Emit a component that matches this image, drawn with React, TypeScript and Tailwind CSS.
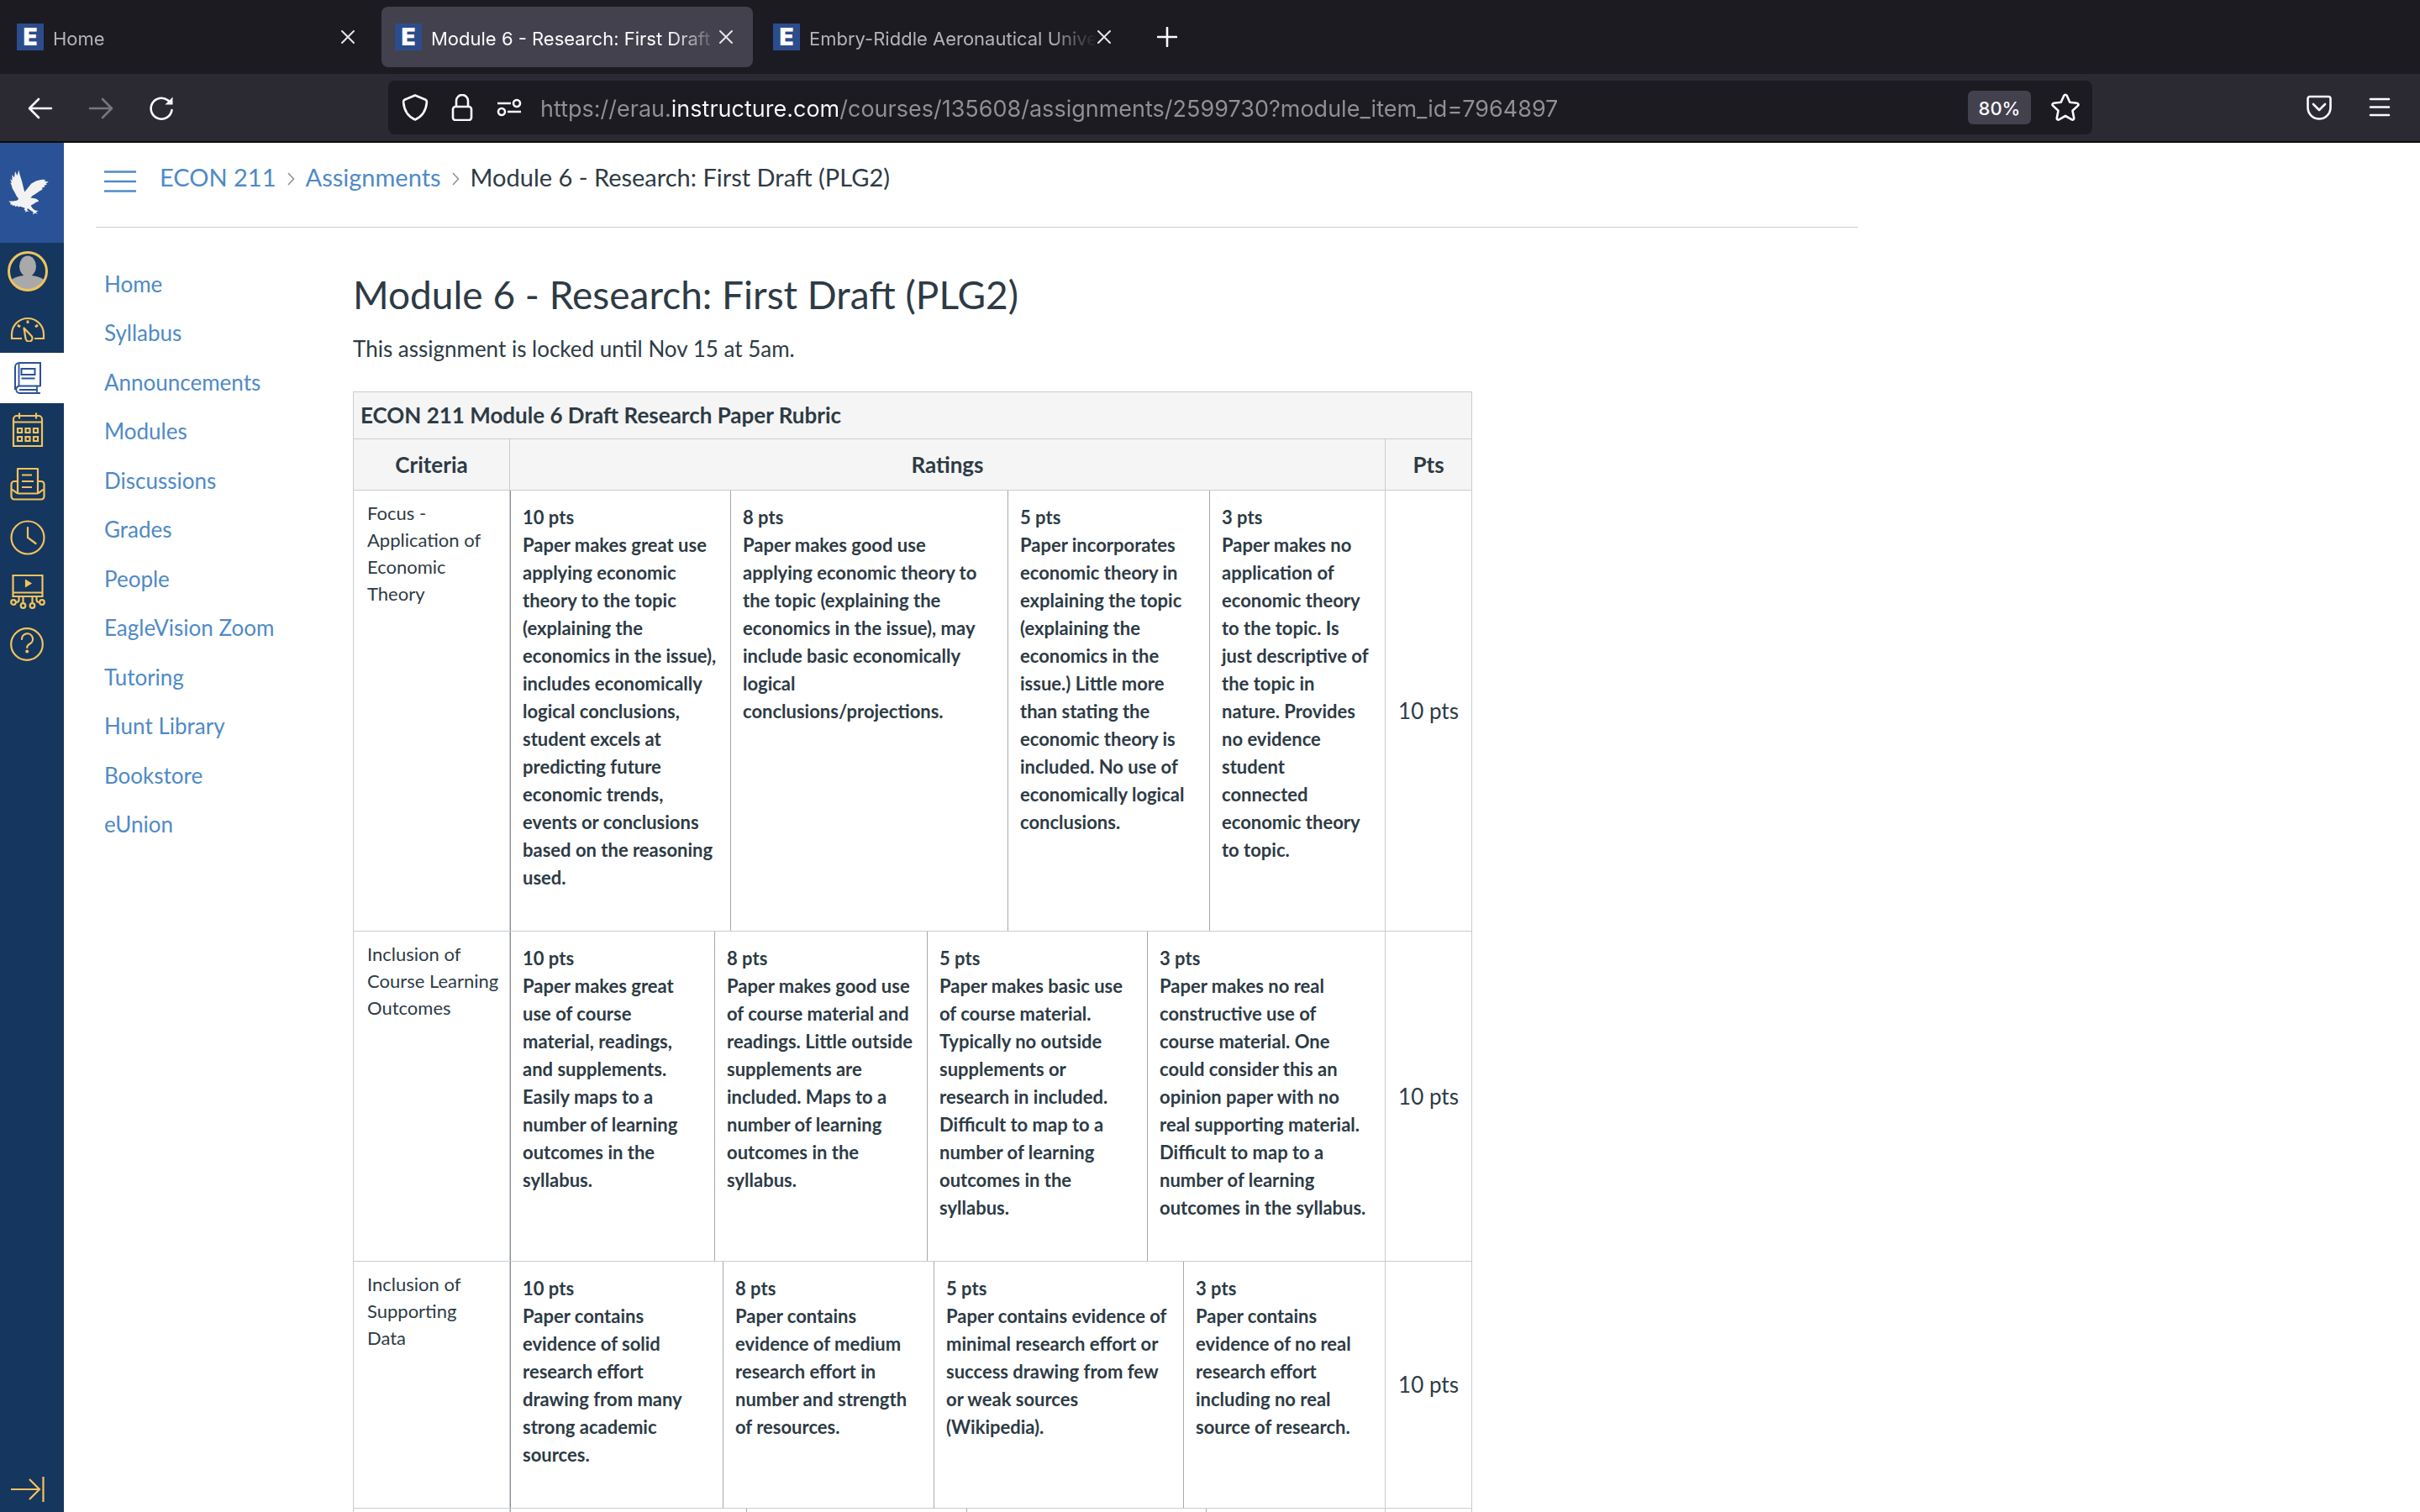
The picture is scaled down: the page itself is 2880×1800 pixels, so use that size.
import React from 'react';

interface Rating {
  pts: string;
  text: string;
  width: string;
}

interface Criterion {
  name: string;
  ratings: Rating[];
  pts: string;
}

const TABS = [
  { title: 'Home', active: false },
  { title: 'Module 6 - Research: First Draft', active: true },
  { title: 'Embry-Riddle Aeronautical Unive', active: false },
];

const COURSE_LINKS = [
  'Home',
  'Syllabus',
  'Announcements',
  'Modules',
  'Discussions',
  'Grades',
  'People',
  'EagleVision Zoom',
  'Tutoring',
  'Hunt Library',
  'Bookstore',
  'eUnion',
];

const CRITERIA: Criterion[] = [
  {
    name: 'Focus -\nApplication of Economic Theory',
    pts: '10 pts',
    ratings: [
      { pts: '10 pts', width: 'w-[262px]', text: 'Paper makes great use applying economic theory to the topic (explaining the economics in the issue), includes economically logical conclusions, student excels at predicting future economic trends, events or conclusions based on the reasoning used.' },
      { pts: '8 pts', width: 'w-[330px]', text: 'Paper makes good use applying economic theory to the topic (explaining the economics in the issue), may include basic economically logical conclusions/projections.' },
      { pts: '5 pts', width: 'w-[240px]', text: 'Paper incorporates economic theory in explaining the topic (explaining the economics in the issue.) Little more than stating the economic theory is included. No use of economically logical conclusions.' },
      { pts: '3 pts', width: 'w-[209px]', text: 'Paper makes no application of economic theory to the topic. Is just descriptive of the topic in nature. Provides no evidence student connected economic theory to topic.' },
    ],
  },
  {
    name: 'Inclusion of\nCourse Learning Outcomes',
    pts: '10 pts',
    ratings: [
      { pts: '10 pts', width: 'w-[243px]', text: 'Paper makes great use of course material, readings, and supplements. Easily maps to a number of learning outcomes in the syllabus.' },
      { pts: '8 pts', width: 'w-[253px]', text: 'Paper makes good use of course material and readings. Little outside supplements are included. Maps to a number of learning outcomes in the syllabus.' },
      { pts: '5 pts', width: 'w-[262px]', text: 'Paper makes basic use of course material. Typically no outside supplements or research in included. Difficult to map to a number of learning outcomes in the syllabus.' },
      { pts: '3 pts', width: 'w-[283px]', text: 'Paper makes no real constructive use of course material. One could consider this an opinion paper with no real supporting material. Difficult to map to a number of learning outcomes in the syllabus.' },
    ],
  },
  {
    name: 'Inclusion of\nSupporting\nData',
    pts: '10 pts',
    ratings: [
      { pts: '10 pts', width: 'w-[253px]', text: 'Paper contains evidence of solid research effort drawing from many strong academic sources.' },
      { pts: '8 pts', width: 'w-[251px]', text: 'Paper contains evidence of medium research effort in number and strength of resources.' },
      { pts: '5 pts', width: 'w-[297px]', text: 'Paper contains evidence of minimal research effort or success drawing from few or weak sources (Wikipedia).' },
      { pts: '3 pts', width: 'w-[240px]', text: 'Paper contains evidence of no real research effort including no real source of research.' },
    ],
  },
];

// the fourth row only peeks in at the bottom edge
const NEXT_ROW_WIDTHS = ['w-[281px]', 'w-[262px]', 'w-[285px]', 'w-[213px]'];

const CloseIcon = () => (
  <svg width="18" height="18" viewBox="0 0 18 18" fill="none" stroke="#e6e6ea" strokeWidth="2" strokeLinecap="round">
    <path d="M2 2l14 14M16 2L2 16" />
  </svg>
);

const Favicon = () => (
  <span className="flex h-8 w-8 shrink-0 items-center justify-center bg-[#2c4d8c] font-['Inter',sans-serif] text-[28px] leading-8 font-black text-white">
    E
  </span>
);

const BrowserTab: React.FC<{ title: string; active: boolean }> = ({ title, active }) => (
  <div className={`flex h-[72px] w-[442px] items-center rounded-lg pr-[23px] pl-4 ${active ? 'bg-[#42414d] text-[#fbfbfe]' : 'text-[#b3b3b8]'}`}>
    <Favicon />
    <span className="ml-[11px] min-w-0 flex-1 overflow-hidden pt-1 text-[22px] whitespace-nowrap [mask-image:linear-gradient(90deg,#000_calc(100%-56px),transparent)]">
      {title}
    </span>
    <button aria-label="Close tab"><CloseIcon /></button>
  </div>
);

const Toolbar = () => (
  <div className="flex h-[82px] items-center border-b-2 border-[#0c0c0d] bg-[#2b2a33] pr-8 pl-8">
    <div className="flex w-[430px] shrink-0 items-center gap-10 pt-px text-[#fbfbfe]">
      <button aria-label="Back">
        <svg width="32" height="32" viewBox="0 0 32 32" fill="none" stroke="currentColor" strokeWidth="2.600" strokeLinecap="round" strokeLinejoin="round">
          <path d="M29 16H4M14 5L3 16l11 11" />
        </svg>
      </button>
      <button aria-label="Forward" className="text-[#77767e]">
        <svg width="32" height="32" viewBox="0 0 32 32" fill="none" stroke="currentColor" strokeWidth="2.600" strokeLinecap="round" strokeLinejoin="round">
          <path d="M3 16h25M18 5l11 11-11 11" />
        </svg>
      </button>
      <button aria-label="Reload">
        <svg width="32" height="32" viewBox="0 0 32 32" fill="none" stroke="currentColor" strokeWidth="2.600" strokeLinecap="round">
          <path d="M28.500 18A12.500 12.500 0 1 1 24 6.500L27 9" />
          <path d="M29.500 2.500v9h-9z" fill="currentColor" stroke="none" />
        </svg>
      </button>
    </div>
    <div className="flex h-16 w-[2028px] min-w-0 items-center rounded-lg bg-[#1c1b22] pr-[15px] pl-4 text-[#fbfbfe]">
      <svg width="32" height="32" viewBox="0 0 32 32" fill="none" stroke="currentColor" strokeWidth="2.600" strokeLinejoin="round">
        <path d="M16 1.500l12 5c1.500.6 2 1.400 1.900 3.200C29.200 18 26.500 26 16 30.500 5.500 26 2.800 18 2.100 9.700 2 7.900 2.500 7.100 4 6.500z" />
      </svg>
      <svg className="ml-6" width="32" height="32" viewBox="0 0 32 32" fill="none" stroke="currentColor" strokeWidth="2.600">
        <rect x="5" y="15" width="22" height="16" rx="3" />
        <path d="M9 15V8a7 7 0 0 1 14 0v7" />
      </svg>
      <svg className="ml-6" width="32" height="32" viewBox="0 0 32 32" fill="none" stroke="currentColor" strokeWidth="2.600">
        <path d="M2 11h16M14 21h16" />
        <circle cx="25" cy="11" r="4" />
        <circle cx="7" cy="21" r="4" />
      </svg>
      <input
        aria-label="Address"
        readOnly
        className="ml-[21px] min-w-0 flex-1 bg-[linear-gradient(90deg,#919096_155px,#fbfbfe_155px,#fbfbfe_354px,#919096_354px)] bg-clip-text pt-1 text-[27px] text-transparent outline-none"
        value="https://erau.instructure.com/courses/135608/assignments/2599730?module_item_id=7964897"
      />
      <button className="h-10 w-[75px] rounded-md bg-[#42414d] pt-0.5 text-[22px] font-medium">80%</button>
      <button aria-label="Bookmark" className="ml-6">
        <svg width="34" height="34" viewBox="0 0 34 34" fill="none" stroke="currentColor" strokeWidth="2.600" strokeLinejoin="round">
          <path d="M15.300 2.800c.7-1.400 2.700-1.400 3.400 0l3.600 8 8.500 1c1.600.2 2.200 2 1 3.100l-6.300 5.800 1.700 8.700c.3 1.500-1.200 2.700-2.600 1.900L17 27l-7.600 4.300c-1.400.8-2.900-.4-2.600-1.900l1.700-8.700-6.300-5.800c-1.200-1.100-.6-2.900 1-3.100l8.500-1z" />
        </svg>
      </button>
    </div>
    <div className="ml-auto flex shrink-0 items-center gap-10 text-[#fbfbfe]">
      <button aria-label="Pocket">
        <svg width="32" height="32" viewBox="0 0 32 32" fill="none" stroke="currentColor" strokeWidth="2.600" strokeLinecap="round" strokeLinejoin="round">
          <path d="M5 3h22a2.500 2.500 0 0 1 2.500 2.500V16a13.500 13.500 0 0 1-27 0V5.500A2.500 2.500 0 0 1 5 3z" />
          <path d="M9 12l7 7 7-7" />
        </svg>
      </button>
      <button aria-label="Menu">
        <svg width="32" height="32" viewBox="0 0 32 32" stroke="currentColor" strokeWidth="2.600" strokeLinecap="round">
          <path d="M5 6h22M5 15.500h22M5 25h22" />
        </svg>
      </button>
    </div>
  </div>
);

const EagleLogo = () => (
  <svg width="50" height="56" viewBox="0 0 50 56" fill="#f2f2f2">
    <path d="M13.300.5L14.300 5 17 13.500 19 21.800 20.300 26.500 23.500 22.500 28.300 16.500 34.300 13.200 41 11.800 45.500 12 43.500 13.500 48.800 14.500 45.500 16.500 47 17.500 43.500 19 44.500 20.500 41 21.500 41.500 23.500 37.700 25.800 33 29 29.300 31.200 27.500 33.600 33.700 34.500 36.500 36.200 37 38 34.300 38.500 31.500 40.500 27.700 42.500 29 45.200 32 48 36.800 49.300 33.500 50.500 36 52.500 32.500 51.800 30.300 53.500 30.500 50.500 27.500 48.500 24 46 23.200 48 25.800 50 23.500 49.500 21 50.800 21.500 48.500 19.500 48 20.800 45.800 15 43.800 13 44.500 11.500 43 9.500 44.200 8.500 42.500 6 43 5.500 41.500 3 41.500 3.800 39.800 1.300 37.500 6 37.500 11 36.800 13.200 35 10.500 31 8.300 26.800 5.800 22.500 5 19.500 3.300 15.200 5 16 3 11 5.500 13 5.500 6 8 9.500 9 2 11.500 7z" />
  </svg>
);

const GlobalNav = () => (
  <nav aria-label="Global" className="flex w-[76px] shrink-0 flex-col bg-[#15365e] text-[#f1c35c]">
    <a href="#home" aria-label="University home" className="flex h-[119px] items-center justify-center bg-[#2a5297] pr-2"><EagleLogo /></a>
    <a href="#account" aria-label="Account" className="flex h-[68px] items-center justify-center pr-[10px]">
      <svg width="48" height="48" viewBox="0 0 48 48">
        <defs>
          <clipPath id="avatar"><circle cx="24" cy="24" r="21.500" /></clipPath>
        </defs>
        <g clipPath="url(#avatar)" fill="#a9a9a9">
          <ellipse cx="24" cy="18" rx="10" ry="12.500" />
          <path d="M19 27h10v2c8 1 13 3 17 8v11H2V37c4-5 9-7 17-8z" />
        </g>
        <circle cx="24" cy="24" r="22.500" fill="none" stroke="#f1c35c" strokeWidth="3" />
      </svg>
    </a>
    <a href="#dashboard" aria-label="Dashboard" className="flex h-[63px] items-center justify-center pt-1.5 pr-[10px]">
      <svg width="42" height="30" viewBox="0 0 42 30" fill="none" stroke="currentColor" strokeWidth="2.200">
        <path d="M14 26H2v-5a19 19 0 0 1 38 0v5H29" />
        <path d="M16.500 13.500l9 9.500a4 4 0 1 1-7 3z" strokeLinejoin="round" />
        <path d="M21 4.500v3.500M9 10l3 2.200M33 10l-3 2.200" strokeWidth="2.800" />
      </svg>
    </a>
    <a href="#courses" aria-label="Courses" className="flex h-[60px] items-center justify-center bg-white pr-[10px] text-[#2a5297]">
      <svg width="32" height="38" viewBox="0 0 32 38" fill="none" stroke="currentColor" strokeWidth="2">
        <path d="M31 29V1H6a5 5 0 0 0-5 5v27" />
        <path d="M31 28.500H6a4.300 4.300 0 0 0 0 8.500h25M5.500 1v28M27 29v8M6 33h21" strokeWidth="1.800" />
        <path d="M8.500 8h16v7h-16zM8.500 19.500h16" />
      </svg>
    </a>
    <a href="#calendar" aria-label="Calendar" className="flex h-16 items-center justify-center pr-[10px]">
      <svg width="38" height="42" viewBox="0 0 38 42" fill="none" stroke="currentColor" strokeWidth="2.200">
        <path d="M2 8a4 4 0 0 1 4-4h26a4 4 0 0 1 4 4v32H2zM2 11.500h34M9 .5v7M29 .5v7" />
        <path d="M7 19h5v5H7zM16.500 19h5v5h-5zM26 19h5v5h-5zM7 29h5v5H7zM16.500 29h5v5h-5zM26 29h5v5h-5z" />
      </svg>
    </a>
    <a href="#inbox" aria-label="Inbox" className="flex h-16 items-center justify-center pr-[10px]">
      <svg width="42" height="40" viewBox="0 0 42 40" fill="none" stroke="currentColor" strokeWidth="2.200" strokeLinejoin="round">
        <path d="M9 31V2h24v29M9 17H5a3.500 3.500 0 0 0-3.500 3.500V35a3.500 3.500 0 0 0 3.500 3.500h32a3.500 3.500 0 0 0 3.500-3.500V20.500A3.500 3.500 0 0 0 37 17h-4" />
        <path d="M2 27c3 0 4 4 8 4.500h22c4-.5 5-4.500 8-4.500" />
        <path d="M14 9.500h12M14 17h14M14 24h12" />
      </svg>
    </a>
    <a href="#history" aria-label="History" className="flex h-16 items-center justify-center pr-[10px]">
      <svg width="42" height="42" viewBox="0 0 42 42" fill="none" stroke="currentColor" strokeWidth="2.200" strokeLinecap="round">
        <circle cx="21" cy="21" r="19.500" />
        <path d="M21 9v12l9.500 7" />
      </svg>
    </a>
    <a href="#commons" aria-label="Commons" className="flex h-16 items-center justify-center pr-[10px]">
      <svg width="42" height="42" viewBox="0 0 42 42" fill="none" stroke="currentColor" strokeWidth="2.200">
        <path d="M3.500 2h35v25h-35zM3.500 22.500h35M10.500 27v4a3 3 0 0 1-3 3H6M15.500 27v8.500M26.500 27v8.500M31.500 27v4a3 3 0 0 0 3 3H36" />
        <path d="M19 8.500v6l5-3z" fill="currentColor" />
        <circle cx="4" cy="34" r="2.800" />
        <circle cx="15.500" cy="38" r="2.800" />
        <circle cx="26.500" cy="38" r="2.800" />
        <circle cx="38" cy="34" r="2.800" />
      </svg>
    </a>
    <a href="#help" aria-label="Help" className="flex h-[62px] items-center justify-center pr-3">
      <svg width="40" height="40" viewBox="0 0 40 40" fill="none" stroke="currentColor" strokeWidth="2.200" strokeLinecap="round">
        <circle cx="20" cy="20" r="18.800" />
        <path d="M14 14a6.500 6.500 0 1 1 9.500 5.500C21 20.800 20.200 21.500 20.200 24" />
        <circle cx="20.200" cy="28.500" r="2" fill="currentColor" stroke="none" />
      </svg>
    </a>
    <button aria-label="Expand navigation" className="mt-auto flex h-[54px] items-center justify-center pr-[10px]">
      <svg width="40" height="30" viewBox="0 0 40 30" fill="none" stroke="currentColor" strokeWidth="2.200">
        <path d="M0 15h33M22 3l12 12-12 12M38.500 0v30" />
      </svg>
    </button>
  </nav>
);

const Crumb = () => (
  <svg className="mx-[13px] mt-1" width="9" height="16" viewBox="0 0 9 16" fill="none" stroke="#8b9096" strokeWidth="1.500">
    <path d="M1 1l6.500 7L1 15" />
  </svg>
);

const RubricRow: React.FC<{ criterion: Criterion }> = ({ criterion }) => (
  <tr>
    <td className="border border-[#c7cdd1] pt-[11px] pr-2 pl-4 align-top text-[22px] leading-8 whitespace-pre-line">{criterion.name}</td>
    <td className="border border-[#c7cdd1] p-0 align-top">
      <div className="flex text-[22px] leading-[33px] font-bold">
        {criterion.ratings.map((r) => (
          <div key={r.pts} className={`${r.width} border-l border-[#a5a9ad] px-[14px] pt-[15px] pb-[47px] first:border-[#8b8f94] last:pr-4`}>
            <p>{r.pts}</p>
            <p>{r.text}</p>
          </div>
        ))}
      </div>
    </td>
    <td className="border border-[#c7cdd1] text-center">{criterion.pts}</td>
  </tr>
);

const Rubric = () => (
  <table className="mt-8 w-full max-w-[1332px] table-fixed border-collapse text-[26px]">
    <caption className="h-14 border border-b-0 border-[#c7cdd1] bg-[#f5f5f5] px-2 text-left leading-[55px] font-bold">
      ECON 211 Module 6 Draft Research Paper Rubric
    </caption>
    <colgroup>
      <col className="w-[186px]" />
      <col />
      <col className="w-[103px]" />
    </colgroup>
    <thead>
      <tr className="h-[61px] bg-[#f5f5f5]">
        <th className="border border-[#c7cdd1]">Criteria</th>
        <th className="border border-[#c7cdd1]">Ratings</th>
        <th className="border border-[#c7cdd1]">Pts</th>
      </tr>
    </thead>
    <tbody>
      {CRITERIA.map((c) => <RubricRow key={c.name} criterion={c} />)}
      <tr>
        <td className="border border-[#c7cdd1]" />
        <td className="border border-[#c7cdd1] p-0">
          <div className="flex h-10">
            {NEXT_ROW_WIDTHS.map((w) => <div key={w} className={`${w} border-l border-[#a5a9ad]`} />)}
          </div>
        </td>
        <td className="border border-[#c7cdd1]" />
      </tr>
    </tbody>
  </table>
);

export default function App() {
  return (
    <div className="flex h-screen flex-col overflow-hidden bg-white font-['Inter',sans-serif]">
      <header className="shrink-0">
        <div className="flex h-[88px] items-center gap-2 bg-[#1c1b22] pl-1">
          {TABS.map((t) => <BrowserTab key={t.title} {...t} />)}
          <button aria-label="New tab" className="ml-[23px]">
            <svg width="24" height="24" viewBox="0 0 24 24" stroke="#fbfbfe" strokeWidth="2.600" strokeLinecap="round">
              <path d="M12 1v22M1 12h22" />
            </svg>
          </button>
        </div>
        <Toolbar />
      </header>

      <div className="flex min-h-0 flex-1 font-['Lato',sans-serif] text-[#2d3b45]">
        <GlobalNav />
        <div className="min-w-0 flex-1 overflow-hidden pl-[38px]">
          <div className="flex h-[101px] max-w-[2097px] items-start border-b border-[#c7cdd1] pl-[10px]">
            <button aria-label="Course navigation" className="mt-[33px]">
              <svg width="38" height="26" viewBox="0 0 38 26" stroke="#4f8ac6" strokeWidth="2.400">
                <path d="M0 1.500h38M0 13h38M0 24.500h38" />
              </svg>
            </button>
            <nav aria-label="Breadcrumb" className="mt-[23px] ml-7 flex items-center text-[29px] leading-9">
              <a href="#course" className="text-[#4f8ac6]">ECON 211</a>
              <Crumb />
              <a href="#assignments" className="text-[#4f8ac6]">Assignments</a>
              <Crumb />
              <span>Module 6 - Research: First Draft (PLG2)</span>
            </nav>
          </div>

          <div className="flex">
            <nav aria-label="Course" className="mt-[38px] w-[306px] shrink-0 pl-[10px] text-[26px] text-[#4f8ac6]">
              <ul className="grid h-[702px] auto-rows-fr items-center">
                {COURSE_LINKS.map((label) => (
                  <li key={label}><a href={`#${label}`}>{label}</a></li>
                ))}
              </ul>
            </nav>
            <main className="min-w-0 flex-1">
              <h1 className="mt-[52px] text-[46px] leading-[56px]">Module 6 - Research: First Draft (PLG2)</h1>
              <p className="mt-[17px] text-[26px] leading-[38px]">This assignment is locked until Nov 15 at 5am.</p>
              <Rubric />
            </main>
          </div>
        </div>
      </div>
    </div>
  );
}
